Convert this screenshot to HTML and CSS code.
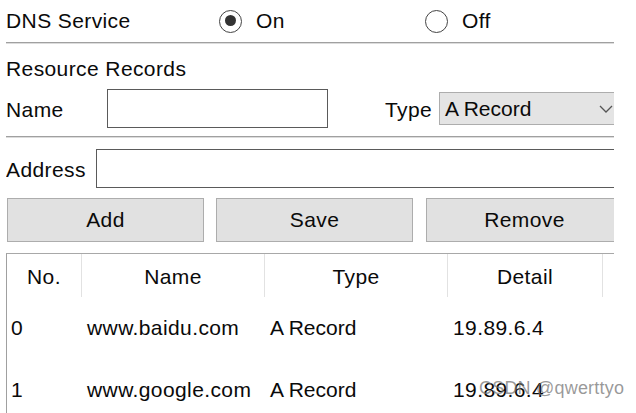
FILE: index.html
```html
<!DOCTYPE html>
<html>
<head>
<meta charset="utf-8">
<link rel="stylesheet" href="styles.css">
</head>
<body>
<div class="panel">
  <div class="row-dns">
    <span class="lbl-dns">DNS Service</span>
    <label class="radio"><span class="circle checked"></span><span>On</span></label>
    <label class="radio"><span class="circle"></span><span>Off</span></label>
  </div>
  <div class="sep"></div>
  <div class="title">Resource Records</div>
  <div class="row-name">
    <span class="lbl-name">Name</span>
    <div class="input name-input"></div>
    <span class="lbl-type">Type</span>
    <div class="select">
      <span>A Record</span>
      <svg class="chev" width="14" height="8" viewBox="0 0 14 8"><polyline points="1,1 7,7 13,1" fill="none" stroke="#555" stroke-width="1.3"/></svg>
    </div>
  </div>
  <div class="sep"></div>
  <div class="row-addr">
    <span class="lbl-addr">Address</span>
    <div class="input addr-input"></div>
  </div>
  <div class="buttons">
    <div class="btn">Add</div>
    <div class="btn">Save</div>
    <div class="btn">Remove</div>
  </div>
  <div class="table">
    <div class="thead">
      <div class="th c1">No.</div>
      <div class="th c2">Name</div>
      <div class="th c3">Type</div>
      <div class="th c4">Detail</div>
      <div class="th c5"></div>
    </div>
    <div class="tr">
      <div class="td c1">0</div>
      <div class="td c2">www.baidu.com</div>
      <div class="td c3">A Record</div>
      <div class="td c4">19.89.6.4</div>
    </div>
    <div class="tr">
      <div class="td c1">1</div>
      <div class="td c2">www.google.com</div>
      <div class="td c3">A Record</div>
      <div class="td c4">19.89.6.4</div>
    </div>
  </div>
</div>
<div class="watermark">CSDN @qwerttyo</div>
</body>
</html>
```
FILE: styles.css
```css
html, body {
  margin: 0;
  padding: 0;
  background: #fff;
}
body {
  font-family: "Liberation Sans", Arial, sans-serif;
  font-size: 21px;
  letter-spacing: 0.4px;
  color: #0a0a0a;
  width: 636px;
  height: 413px;
  overflow: hidden;
  position: relative;
}
.panel {
  margin-left: 6px;
  width: 608px;
  overflow: hidden;
}
.panel * {
  flex: none;
}
.row-dns {
  height: 42px;
  display: flex;
  align-items: center;
}
.lbl-dns {
  width: 213px;
}
.radio {
  display: flex;
  align-items: center;
  width: 206px;
}
.circle {
  box-sizing: border-box;
  width: 23px;
  height: 23px;
  border: 1.5px solid #444;
  border-radius: 50%;
  margin-right: 14px;
  position: relative;
}
.circle.checked::after {
  content: "";
  position: absolute;
  left: 4.5px;
  top: 4.5px;
  width: 11px;
  height: 11px;
  border-radius: 50%;
  background: #333;
}
.sep {
  height: 0;
  border-top: 1px solid #a0a0a0;
  border-bottom: 1px solid #dcdcdc;
}
.title {
  height: 38px;
  line-height: 38px;
  padding-top: 6px;
}
.row-name {
  margin-top: 1px;
  height: 39px;
  display: flex;
  align-items: center;
  margin-bottom: 8px;
}
.lbl-name {
  width: 101px;
  padding-top: 3px;
}
.input {
  box-sizing: border-box;
  height: 39px;
  border: 1.5px solid #5a5a5a;
  background: #fff;
}
.name-input {
  width: 221px;
}
.lbl-type {
  margin-left: 57px;
  width: 54px;
  padding-top: 2px;
}
.select {
  box-sizing: border-box;
  width: 190px;
  height: 33px;
  background: #e4e4e4;
  border: 1px solid #adadad;
  display: flex;
  align-items: center;
  padding-left: 5px;
  position: relative;
  letter-spacing: 0;
}
.chev {
  position: absolute;
  left: 159px;
  top: 12px;
}
.row-addr {
  margin-top: 11px;
  height: 39px;
  display: flex;
  align-items: center;
}
.lbl-addr {
  width: 90px;
  padding-top: 2px;
}
.addr-input {
  width: 540px;
}
.buttons {
  margin-top: 10px;
  display: flex;
  gap: 12px;
  padding-left: 1px;
}
.btn {
  box-sizing: border-box;
  width: 197px;
  height: 44px;
  background: #e1e1e1;
  border: 1.5px solid #adadad;
  display: flex;
  align-items: center;
  justify-content: center;
}
.btn:nth-child(3) {
  margin-left: 1px;
}
.table {
  margin-top: 11px;
  border-top: 1.5px solid #a8a8a8;
  border-left: 1.5px solid #a0a0a0;
  height: 170px;
}
.thead {
  display: flex;
  height: 43px;
}
.th {
  box-sizing: border-box;
  display: flex;
  align-items: center;
  justify-content: center;
  padding-top: 3px;
  border-right: 1px solid #e2e2e2;
}
.c1 { width: 75px; }
.c2 { width: 183px; }
.c3 { width: 183px; }
.c4 { width: 155px; }
.c5 { width: 40px; }
.tr {
  display: flex;
  height: 62px;
  align-items: center;
}
.td {
  box-sizing: border-box;
  padding-left: 4px;
}
.td.c2, .td.c3, .td.c4 { padding-left: 5px; }
.td.c3 { letter-spacing: 0; }
.watermark {
  position: absolute;
  left: 479px;
  top: 378px;
  font-size: 18px;
  letter-spacing: 0.2px;
  color: rgba(120, 120, 120, 0.75);
}
```
